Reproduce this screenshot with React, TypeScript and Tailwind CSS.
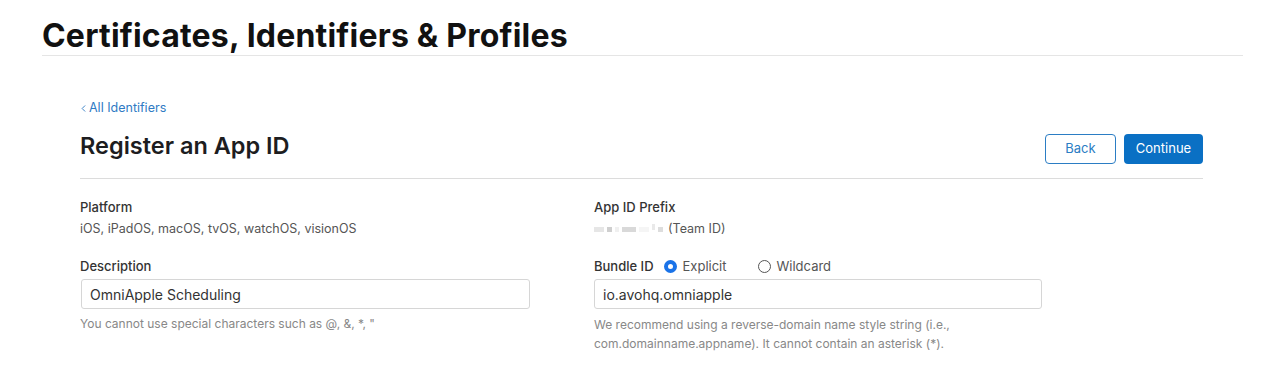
import { ChevronLeft } from "lucide-react";

const Field = ({ label, children }: { label: React.ReactNode; children: React.ReactNode }) => (
  <div className="flex flex-col">
    <div className="text-[13px] font-medium text-[#333] leading-[18px]">{label}</div>
    {children}
  </div>
);

const Radio = ({ checked, label }: { checked?: boolean; label: string }) => (
  <label className="flex items-center gap-[6px] text-[13px] text-[#555] font-normal">
    <span
      className={
        checked
          ? "w-[13px] h-[13px] rounded-full border-[4px] border-[#1a73e8] bg-white"
          : "w-[13px] h-[13px] rounded-full border border-[#555] bg-white"
      }
    />
    {label}
  </label>
);

export default function App() {
  return (
    <div className="w-[1280px] h-[384px] bg-white font-['Inter',sans-serif] text-[#1d1d1f] overflow-hidden">
      <div className="px-[42px] pt-[17px]">
        <h1 className="text-[32px] font-bold tracking-[0.2px] leading-[37px] text-[#111]">
          Certificates, Identifiers &amp; Profiles
        </h1>
        <div className="h-px bg-[#e5e5e5] mt-[1px] mr-[-5px]" />
      </div>

      <div className="px-[80px] pr-[77px] mt-[44px]">
        <a className="flex items-center text-[12.5px] text-[#2f7bc4] leading-[16px]">
          <ChevronLeft size={11} strokeWidth={2} className="-ml-[2px] mr-[0px]" />
          All Identifiers
        </a>
        <div className="flex items-center justify-between mt-[12px] pb-[14px] border-b border-[#dcdcdc]">
          <h2 className="text-[23.5px] font-semibold leading-[32px] text-[#1d1d1f]">Register an App ID</h2>
          <div className="flex gap-[8px] mt-[6px]">
            <button className="w-[71px] h-[30px] rounded-[4px] border border-[#2b7dc4] text-[13px] text-[#2b7dc4] bg-white">
              Back
            </button>
            <button className="w-[79px] h-[30px] rounded-[4px] bg-[#0a70c4] text-[13px] text-white">
              Continue
            </button>
          </div>
        </div>

        <div className="grid grid-cols-[514px_1fr] mt-[19px]">
          <div className="flex flex-col gap-[19px]">
            <Field label="Platform">
              <div className="text-[12.5px] text-[#555] mt-[4px] leading-[18px]">
                iOS, iPadOS, macOS, tvOS, watchOS, visionOS
              </div>
            </Field>
            <Field label="Description">
              <input
                readOnly
                value="OmniApple Scheduling"
                className="mt-[4px] w-[449px] h-[30px] ml-[1px] border border-[#d6d6d6] rounded-[3px] px-[8px] text-[14px] text-[#333] outline-none"
              />
              <div className="text-[12px] text-[#888] mt-[6px] leading-[18px]">
                You cannot use special characters such as @, &amp;, *, "
              </div>
            </Field>
          </div>
          <div className="flex flex-col gap-[19px]">
            <Field label="App ID Prefix">
              <div className="flex items-center text-[12.5px] text-[#555] mt-[4px] leading-[18px]">
                <span className="flex items-center gap-[3px] mr-[5px]">
                  <span className="w-[10px] h-[5px] bg-[#e6e6e6]" />
                  <span className="w-[5px] h-[5px] bg-[#cfcfcf]" />
                  <span className="w-[4px] h-[5px] bg-[#f0f0f0]" />
                  <span className="w-[14px] h-[5px] bg-[#d9d9d9]" />
                  <span className="w-[10px] h-[5px] bg-[#f5f5f5]" />
                  <span className="w-[3px] h-[6px] bg-[#e9e9e9] -mt-[5px]" />
                  <span className="w-[5px] h-[5px] bg-[#dddddd]" />
                </span>
                (Team ID)
              </div>
            </Field>
            <Field
              label={
                <div className="flex items-center gap-[10px]">
                  <span>Bundle ID</span>
                  <Radio checked label="Explicit" />
                  <span className="w-[11px]" />
                  <Radio label="Wildcard" />
                </div>
              }
            >
              <input
                readOnly
                value="io.avohq.omniapple"
                className="mt-[4px] w-[448px] h-[30px] border border-[#d6d6d6] rounded-[3px] px-[8px] text-[14px] text-[#333] outline-none"
              />
              <div className="text-[12px] text-[#888] mt-[6px] leading-[19px]">
                We recommend using a reverse-domain name style string (i.e.,
                <br />
                com.domainname.appname). It cannot contain an asterisk (*).
              </div>
            </Field>
          </div>
        </div>
      </div>
    </div>
  );
}
